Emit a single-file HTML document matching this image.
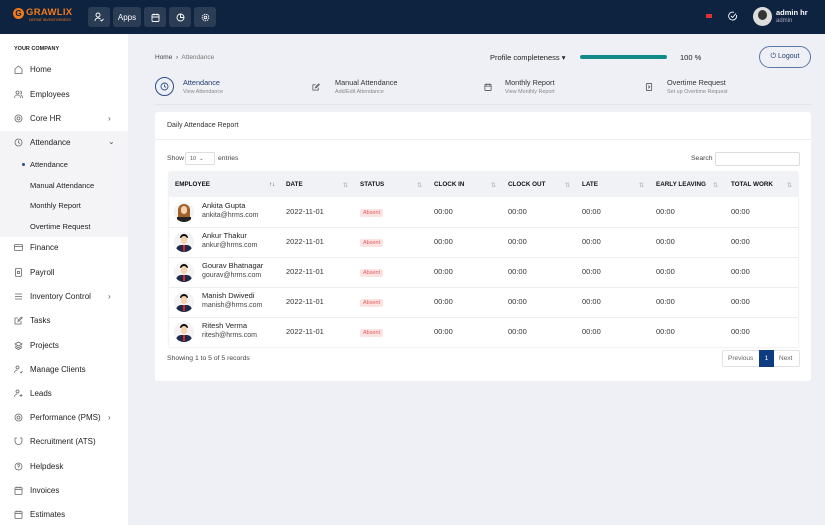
<!DOCTYPE html>
<html><head><meta charset="utf-8"><style>
*{margin:0;padding:0;box-sizing:border-box}
body{width:825px;height:525px;overflow:hidden;background:#eff0f5;font-family:"Liberation Sans",sans-serif;color:#222;position:relative}
.a{position:absolute}
.hdr{left:0;top:0;width:825px;height:34px;background:#0e2340}
.hb{top:7px;height:20px;background:#2b3c55;border-radius:3px;color:#fff;font-size:8px;display:flex;align-items:center;justify-content:center}
.side{left:0;top:34px;width:128px;height:491px;background:#fff}
.si{left:14px;font-size:8px;color:#222;display:flex;align-items:center}
.si svg{width:9px;height:9px;margin-right:7px}
.ss{left:30px;font-size:7.5px;color:#222}
.chev{left:108px;font-size:8px;color:#555}
.card{left:155px;top:112px;width:656px;height:269px;background:#fff;border-radius:3px}
.th{font-size:6.3px;font-weight:bold;color:#111;top:181px}
.srt{font-size:6px;color:#aaa;top:182px}
.cell{font-size:7.5px;color:#333}
.abs{font-size:5.5px;color:#e06060;background:#fde2e2;padding:1px 3px;border-radius:2px}
.av{width:20px;height:20px;border-radius:50%;background:#f3f3f3;overflow:hidden}
</style></head><body>
<div class="a hdr"></div>
<div class="a" style="left:13px;top:8px;width:11px;height:11px;border-radius:50%;background:#f07a1a;color:#0e2340;font-size:8px;font-weight:bold;text-align:center;line-height:11px">G</div>
<div class="a" style="left:26px;top:7px;color:#f07a1a;font-size:9.5px;font-weight:bold;letter-spacing:.3px">GRAWLIX</div>
<div class="a" style="left:29px;top:18px;color:#f07a1a;font-size:3.5px">DEFINE INVENTIVENESS</div>
<div class="a hb" style="left:88px;width:22px"><svg width="10" height="10" viewBox="0 0 10 10" fill="none" stroke="#fff" stroke-width=".9"><circle cx="4" cy="3" r="2"/><path d="M1 9c0-2 1.5-3 3-3s2 .5 2.5 1M6.5 8l1 1 2-2"/></svg></div>
<div class="a hb" style="left:113px;width:28px">Apps</div>
<div class="a hb" style="left:144px;width:22px"><svg width="9" height="9" viewBox="0 0 9 9" fill="none" stroke="#fff" stroke-width=".9"><rect x="1" y="1.5" width="7" height="7" rx="1"/><path d="M1 4h7M3 .5v2M6 .5v2"/></svg></div>
<div class="a hb" style="left:169px;width:22px"><svg width="9" height="9" viewBox="0 0 9 9" fill="none" stroke="#fff" stroke-width=".9"><circle cx="4.5" cy="4.5" r="3.5"/><path d="M4.5 1v3.5H8"/></svg></div>
<div class="a hb" style="left:194px;width:22px"><svg width="9" height="9" viewBox="0 0 9 9" fill="none" stroke="#fff" stroke-width=".9"><circle cx="4.5" cy="4.5" r="1.3"/><circle cx="4.5" cy="4.5" r="3.3" stroke-dasharray="1.5 .8"/></svg></div>
<div class="a" style="left:706px;top:14px;width:6px;height:4px;background:#e03030"></div>
<svg class="a" style="left:728px;top:11px" width="10" height="10" viewBox="0 0 10 10" fill="none" stroke="#fff" stroke-width=".9"><path d="M8.5 4A4 4 0 1 1 6 1.3"/><path d="M3 5l1.5 1.5L8 2.5"/></svg>
<div class="a" style="left:753px;top:7px;width:19px;height:19px;border-radius:50%;background:#ddd;overflow:hidden"><div style="margin:3px auto 0;width:9px;height:10px;border-radius:50%;background:#333"></div></div>
<div class="a" style="left:776px;top:8px;color:#fff;font-size:7.5px;font-weight:bold">admin hr</div>
<div class="a" style="left:776px;top:18px;color:#aab;font-size:6px">admin</div>

<div class="a side"></div>
<div class="a" style="left:14px;top:46px;font-size:5.5px;font-weight:bold;color:#222">YOUR COMPANY</div>
<div class="a" style="left:0;top:131px;width:128px;height:106px;background:#f4f4f6"></div>
<div class="a si" style="top:65px"><svg viewBox="0 0 9 9" fill="none" stroke="#666" stroke-width=".8"><path d="M1 4L4.5 1 8 4v4.5H1z"/></svg>Home</div>
<div class="a si" style="top:90px"><svg viewBox="0 0 9 9" fill="none" stroke="#666" stroke-width=".8"><circle cx="3.5" cy="2.5" r="1.5"/><path d="M.5 8c0-2 1.5-3 3-3s3 1 3 3M6 1a1.5 1.5 0 0 1 0 3M7 5c1 .5 1.5 1.5 1.5 3"/></svg>Employees</div>
<div class="a si" style="top:114px"><svg viewBox="0 0 9 9" fill="none" stroke="#666" stroke-width=".8"><circle cx="4.5" cy="4.5" r="3.5"/><circle cx="4.5" cy="4.5" r="1.5"/></svg>Core HR</div><div class="a chev" style="top:114px">›</div>
<div class="a si" style="top:138px"><svg viewBox="0 0 9 9" fill="none" stroke="#666" stroke-width=".8"><circle cx="4.5" cy="4.5" r="3.5"/><path d="M4.5 2.5v2l1.3 1"/></svg>Attendance</div><div class="a chev" style="top:137px">⌄</div>
<div class="a" style="left:22px;top:163px;width:3px;height:3px;border-radius:50%;background:#2b4f8a"></div>
<div class="a ss" style="top:160px">Attendance</div>
<div class="a ss" style="top:181px">Manual Attendance</div>
<div class="a ss" style="top:201px">Monthly Report</div>
<div class="a ss" style="top:222px">Overtime Request</div>
<div class="a si" style="top:243px"><svg viewBox="0 0 9 9" fill="none" stroke="#666" stroke-width=".8"><rect x=".5" y="1.5" width="8" height="6" rx=".8"/><path d="M.5 3.5h8"/></svg>Finance</div>
<div class="a si" style="top:268px"><svg viewBox="0 0 9 9" fill="none" stroke="#666" stroke-width=".8"><rect x="1.5" y=".5" width="6" height="8" rx=".8"/><circle cx="4.5" cy="4.5" r="1.2"/></svg>Payroll</div>
<div class="a si" style="top:292px"><svg viewBox="0 0 9 9" fill="none" stroke="#666" stroke-width=".8"><path d="M1 2h7M1 4.5h7M1 7h7"/></svg>Inventory Control</div><div class="a chev" style="top:292px">›</div>
<div class="a si" style="top:316px"><svg viewBox="0 0 9 9" fill="none" stroke="#666" stroke-width=".8"><path d="M7 5v3H1V2h3M4 5.5l.3-1.5L7.5 1 8.3 1.8 5 5z"/></svg>Tasks</div>
<div class="a si" style="top:341px"><svg viewBox="0 0 9 9" fill="none" stroke="#666" stroke-width=".8"><path d="M4.5 1L8 3 4.5 5 1 3zM1 4.8l3.5 2 3.5-2M1 6.5l3.5 2 3.5-2"/></svg>Projects</div>
<div class="a si" style="top:365px"><svg viewBox="0 0 9 9" fill="none" stroke="#666" stroke-width=".8"><circle cx="3.5" cy="2.5" r="1.5"/><path d="M.5 8c0-2 1.5-3 3-3M6 7l1 1 1.5-2"/></svg>Manage Clients</div>
<div class="a si" style="top:389px"><svg viewBox="0 0 9 9" fill="none" stroke="#666" stroke-width=".8"><circle cx="3.5" cy="2.5" r="1.5"/><path d="M.5 8c0-2 1.5-3 3-3M7 5v3M5.5 6.5h3"/></svg>Leads</div>
<div class="a si" style="top:413px"><svg viewBox="0 0 9 9" fill="none" stroke="#666" stroke-width=".8"><circle cx="4.5" cy="4.5" r="3.5"/><circle cx="4.5" cy="4.5" r="1.5"/></svg>Performance (PMS)</div><div class="a chev" style="top:413px">›</div>
<div class="a si" style="top:437px"><svg viewBox="0 0 9 9" fill="none" stroke="#666" stroke-width=".8"><path d="M1 1v3a3.5 3.5 0 0 0 7 0V1M3 1h-2M8 1H6"/></svg>Recruitment (ATS)</div>
<div class="a si" style="top:462px"><svg viewBox="0 0 9 9" fill="none" stroke="#666" stroke-width=".8"><circle cx="4.5" cy="4.5" r="3.5"/><path d="M3.5 3.5a1 1 0 1 1 1 1v1M4.5 6.5v.3"/></svg>Helpdesk</div>
<div class="a si" style="top:486px"><svg viewBox="0 0 9 9" fill="none" stroke="#666" stroke-width=".8"><rect x="1" y="1.5" width="7" height="7" rx=".8"/><path d="M1 3.5h7M3 .5v2M6 .5v2"/></svg>Invoices</div>
<div class="a si" style="top:510px"><svg viewBox="0 0 9 9" fill="none" stroke="#666" stroke-width=".8"><rect x="1" y="1.5" width="7" height="7" rx=".8"/><path d="M1 3.5h7M3 .5v2M6 .5v2"/></svg>Estimates</div>

<div class="a" style="left:155px;top:54px;font-size:6.5px;color:#444">Home &nbsp;›&nbsp; <span style="color:#777">Attendance</span></div>
<div class="a" style="left:490px;top:53px;font-size:7.5px;color:#222">Profile completeness ▾</div>
<div class="a" style="left:580px;top:55px;width:87px;height:4px;background:#138a8a;border-radius:2px"></div>
<div class="a" style="left:680px;top:53px;font-size:7.5px;color:#222">100 %</div>
<div class="a" style="left:759px;top:46px;width:52px;height:22px;border:1px solid #5a78a8;border-radius:11px;font-size:7px;color:#1f3d6e;display:flex;align-items:center;justify-content:center">⏻ Logout</div>

<div class="a" style="left:155px;top:77px;width:19px;height:19px;border:1.2px solid #2b4f8a;border-radius:50%"></div>
<svg class="a" style="left:160px;top:82px" width="9" height="9" viewBox="0 0 9 9" fill="none" stroke="#2b4f8a" stroke-width=".9"><circle cx="4.5" cy="4.5" r="3.5"/><path d="M4.5 2.5v2l1.3 1"/></svg>
<div class="a" style="left:183px;top:78px;font-size:7.3px;color:#1f3d6e">Attendance</div>
<div class="a" style="left:183px;top:89px;font-size:5.4px;color:#888">View Attendance</div>
<svg class="a" style="left:312px;top:83px" width="8" height="8" viewBox="0 0 9 9" fill="none" stroke="#555" stroke-width=".9"><path d="M7 5v3H1V2h3M4 5.5l.3-1.5L7.5 1 8.3 1.8 5 5z"/></svg>
<div class="a" style="left:335px;top:78px;font-size:7.3px;color:#333">Manual Attendance</div>
<div class="a" style="left:335px;top:89px;font-size:5.4px;color:#888">Add/Edit Attendance</div>
<svg class="a" style="left:484px;top:83px" width="8" height="8" viewBox="0 0 9 9" fill="none" stroke="#555" stroke-width=".9"><rect x="1" y="1.5" width="7" height="7" rx=".8"/><path d="M1 3.5h7M3 .5v2M6 .5v2"/></svg>
<div class="a" style="left:505px;top:78px;font-size:7.3px;color:#333">Monthly Report</div>
<div class="a" style="left:505px;top:89px;font-size:5.4px;color:#888">View Monthly Report</div>
<svg class="a" style="left:645px;top:83px" width="8" height="8" viewBox="0 0 9 9" fill="none" stroke="#555" stroke-width=".9"><rect x="1.5" y=".5" width="6" height="8" rx=".8"/><path d="M3.5 3l2 1.5-2 1.5"/></svg>
<div class="a" style="left:667px;top:78px;font-size:7.3px;color:#333">Overtime Request</div>
<div class="a" style="left:667px;top:89px;font-size:5.4px;color:#888">Set up Overtime Request</div>
<div class="a" style="left:155px;top:104px;width:656px;height:1px;background:#e4e5ea"></div>

<div class="a card"></div>
<div class="a" style="left:167px;top:122px;font-size:7px;color:#333">Daily Attendace Report</div>
<div class="a" style="left:155px;top:139px;width:656px;height:1px;background:#eceef2"></div>
<div class="a" style="left:167px;top:155px;font-size:6.8px;color:#444">Show</div>
<div class="a" style="left:185px;top:152px;width:30px;height:13px;border:1px solid #ddd;border-radius:2px;font-size:5.5px;color:#555;padding:3px 0 0 4px">10 &nbsp;⌄</div>
<div class="a" style="left:218px;top:155px;font-size:6.8px;color:#444">entries</div>
<div class="a" style="left:691px;top:155px;font-size:6.8px;color:#444">Search</div>
<div class="a" style="left:715px;top:152px;width:85px;height:14px;border:1px solid #ddd;border-radius:2px"></div>

<div class="a" style="left:169px;top:172px;width:629px;height:175px;box-shadow:0 0 2px rgba(0,0,0,.15)"></div>
<div class="a" style="left:169px;top:172px;width:629px;height:25px;background:#f1f2f6"></div>
<div class="a th" style="left:175px">EMPLOYEE</div><div class="a srt" style="left:269px;color:#333">↑↓</div>
<div class="a th" style="left:286px">DATE</div><div class="a srt" style="left:343px">⇅</div>
<div class="a th" style="left:360px">STATUS</div><div class="a srt" style="left:417px">⇅</div>
<div class="a th" style="left:434px">CLOCK IN</div><div class="a srt" style="left:491px">⇅</div>
<div class="a th" style="left:508px">CLOCK OUT</div><div class="a srt" style="left:565px">⇅</div>
<div class="a th" style="left:582px">LATE</div><div class="a srt" style="left:639px">⇅</div>
<div class="a th" style="left:656px">EARLY LEAVING</div><div class="a srt" style="left:713px">⇅</div>
<div class="a th" style="left:731px">TOTAL WORK</div><div class="a srt" style="left:787px">⇅</div>

<div id="rows"></div>
<script>
var d=[["Ankita Gupta","ankita@hrms.com",1],["Ankur Thakur","ankur@hrms.com",0],["Gourav Bhatnagar","gourav@hrms.com",0],["Manish Dwivedi","manish@hrms.com",0],["Ritesh Verma","ritesh@hrms.com",0]];
var h="";d.forEach(function(r,i){var y=197+i*30;
if(i>0)h+='<div class="a" style="left:169px;top:'+y+'px;width:629px;height:1px;background:#eceef2"></div>';
var av=r[2]?'<div style="position:absolute;left:4px;top:2px;width:12px;height:15px;border-radius:6px 6px 2px 2px;background:#a0612a"></div><div style="position:absolute;left:7px;top:4px;width:6px;height:8px;border-radius:3px;background:#f6d2b0"></div><div style="position:absolute;left:3px;top:15px;width:14px;height:5px;background:#222"></div>':'<div style="position:absolute;left:6px;top:2px;width:8px;height:4px;border-radius:4px 4px 0 0;background:#111"></div><div style="position:absolute;left:7px;top:4px;width:6px;height:8px;border-radius:3px;background:#f6d2b0"></div><div style="position:absolute;left:2px;top:13px;width:16px;height:8px;border-radius:5px 5px 0 0;background:#1b2a4a"></div><div style="position:absolute;left:9.3px;top:13px;width:1.5px;height:6px;background:#d22"></div>';
h+='<div class="a av" style="left:174px;top:'+(y+5)+'px;position:absolute">'+av+'</div>';
h+='<div class="a" style="left:202px;top:'+(y+4)+'px;font-size:7.5px;color:#222">'+r[0]+'</div>';
h+='<div class="a" style="left:202px;top:'+(y+15)+'px;font-size:7px;color:#444">'+r[1]+'</div>';
h+='<div class="a cell" style="left:286px;top:'+(y+10)+'px">2022-11-01</div>';
h+='<div class="a abs" style="left:360px;top:'+(y+12)+'px">Absent</div>';
[434,508,582,656,731].forEach(function(x){h+='<div class="a cell" style="left:'+x+'px;top:'+(y+10)+'px">00:00</div>'});
});document.getElementById("rows").innerHTML=h;
</script>
<div class="a" style="left:167px;top:355px;font-size:6.8px;color:#444">Showing 1 to 5 of 5 records</div>
<div class="a" style="left:722px;top:350px;width:78px;height:17px;border:1px solid #e2e3e8;border-radius:2px"></div>
<div class="a" style="left:728px;top:355px;font-size:6.5px;color:#666">Previous</div>
<div class="a" style="left:759px;top:350px;width:15px;height:17px;background:#0e3c80;color:#fff;font-size:6.5px;text-align:center;line-height:17px">1</div>
<div class="a" style="left:779px;top:355px;font-size:6.5px;color:#666">Next</div>
</body></html>
